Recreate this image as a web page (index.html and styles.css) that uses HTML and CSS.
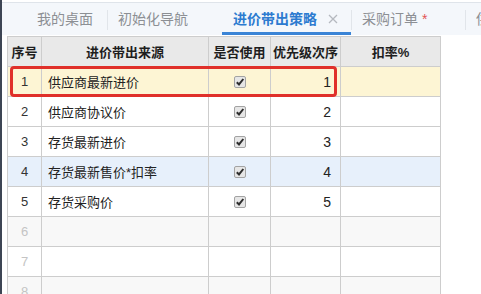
FILE: index.html
```html
<!DOCTYPE html>
<html>
<head>
<meta charset="utf-8">
<link rel="stylesheet" href="styles.css">
</head>
<body>
<div class="app">
  <div class="edge"></div>
  <div class="main">
    <div class="tabs">
      <div class="tab t1">我的桌面</div>
      <div class="tab t2 sep">初始化导航</div>
      <div class="tab t3 active">进价带出策略<svg class="close" width="10" height="10" viewBox="0 0 10 10"><path d="M1 1L9 9M9 1L1 9" stroke="#b5b9bf" stroke-width="1.3"/></svg></div>
      <div class="tab t4 sep">采购订单 <span class="star">*</span></div>
      <div class="tab t5 sep">供应商</div>
    </div>
    <div class="grid-wrap">
      <table class="grid">
        <colgroup>
          <col class="c1"><col class="c2"><col class="c3"><col class="c4"><col class="c5">
        </colgroup>
        <thead>
          <tr><th>序号</th><th>进价带出来源</th><th>是否使用</th><th>优先级次序</th><th>扣率%</th></tr>
        </thead>
        <tbody>
          <tr class="sel"><td class="num">1</td><td class="txt">供应商最新进价</td><td class="chk"><span class="cb"><svg width="10" height="10" viewBox="0 0 10 10"><path d="M1.8 5.2L4 7.4L8.3 2" fill="none" stroke="#2e2e2e" stroke-width="2"/></svg></span></td><td class="pri">1</td><td></td></tr>
          <tr><td class="num">2</td><td class="txt">供应商协议价</td><td class="chk"><span class="cb"><svg width="10" height="10" viewBox="0 0 10 10"><path d="M1.8 5.2L4 7.4L8.3 2" fill="none" stroke="#2e2e2e" stroke-width="2"/></svg></span></td><td class="pri">2</td><td></td></tr>
          <tr><td class="num">3</td><td class="txt">存货最新进价</td><td class="chk"><span class="cb"><svg width="10" height="10" viewBox="0 0 10 10"><path d="M1.8 5.2L4 7.4L8.3 2" fill="none" stroke="#2e2e2e" stroke-width="2"/></svg></span></td><td class="pri">3</td><td></td></tr>
          <tr class="hover"><td class="num">4</td><td class="txt">存货最新售价*扣率</td><td class="chk"><span class="cb"><svg width="10" height="10" viewBox="0 0 10 10"><path d="M1.8 5.2L4 7.4L8.3 2" fill="none" stroke="#2e2e2e" stroke-width="2"/></svg></span></td><td class="pri">4</td><td></td></tr>
          <tr><td class="num">5</td><td class="txt">存货采购价</td><td class="chk"><span class="cb"><svg width="10" height="10" viewBox="0 0 10 10"><path d="M1.8 5.2L4 7.4L8.3 2" fill="none" stroke="#2e2e2e" stroke-width="2"/></svg></span></td><td class="pri">5</td><td></td></tr>
          <tr class="alt empty"><td class="num">6</td><td></td><td></td><td></td><td></td></tr>
          <tr class="empty"><td class="num">7</td><td></td><td></td><td></td><td></td></tr>
          <tr class="alt empty"><td class="num">8</td><td></td><td></td><td></td><td></td></tr>
        </tbody>
      </table>
      <div class="focus-box"></div>
    </div>
  </div>
</div>
</body>
</html>
```

FILE: styles.css
```css
html, body {
  margin: 0;
  padding: 0;
  background: #ffffff;
  overflow: hidden;
}
body {
  width: 481px;
  height: 294px;
  font-family: "Liberation Sans", "Noto Sans CJK SC", sans-serif;
  font-size: 13px;
  color: #222;
}
.app {
  display: flex;
  height: 294px;
}
.edge {
  width: 2px;
  background: #3d4554;
  flex: none;
}
.main {
  flex: 1;
  padding-top: 2px;
  min-width: 0;
}
.tabs {
  height: 32px;
  border-top: 1px solid #dfe4ea;
  background: #f4f7fb;
  display: flex;
  white-space: nowrap;
  overflow: hidden;
}
.tab {
  position: relative;
  box-sizing: border-box;
  height: 32px;
  line-height: 32px;
  font-size: 14px;
  color: #8c8f94;
  padding-left: 11px;
  flex: none;
}
.tab.sep::before {
  content: "";
  position: absolute;
  left: 0;
  top: 7px;
  height: 20px;
  width: 1px;
  background: #e1e5ea;
}
.t1 { width: 105px; padding-left: 35px; }
.t2 { width: 115px; }
.t3 { width: 129px; }
.t4 { width: 114px; }
.t5 { width: 60px; }
.tab.active {
  color: #2d7bd0;
  font-weight: bold;
}
.tab.active::after {
  content: "";
  position: absolute;
  left: 0;
  right: 0;
  bottom: 0;
  height: 3px;
  background: #3a84d6;
}
.close {
  position: absolute;
  left: 106px;
  top: 11px;
}
.star {
  color: #e25555;
}
.grid-wrap {
  position: relative;
  margin-left: 5px;
  margin-top: 1px;
  width: 434px;
}
.grid {
  border-collapse: collapse;
  table-layout: fixed;
  width: 434px;
}
.c1 { width: 34px; }
.c2 { width: 167px; }
.c3 { width: 62px; }
.c4 { width: 70px; }
.c5 { width: 100px; }
.grid th, .grid td {
  border: 1px solid #cdcdcd;
  height: 30px;
  padding: 0;
  box-sizing: border-box;
}
.grid th {
  background: #e9e9e9;
  font-weight: bold;
  font-size: 13px;
  color: #1e1e1e;
  text-align: center;
}
.grid td.num {
  text-align: center;
  color: #333;
}
.grid td.txt {
  padding-left: 6px;
  color: #222;
}
.grid td.chk {
  text-align: center;
}
.grid td.pri {
  text-align: right;
  padding-right: 9px;
  font-size: 14px;
}
.grid tr.sel td {
  background: #fdf5d4;
}
.grid tr.hover td {
  background: #e7f0fb;
}
.grid tr.alt td {
  background: #f8f8f8;
}
.grid tr.empty td.num {
  color: #c4c4c4;
}
.cb {
  display: inline-block;
  width: 12px;
  height: 12px;
  box-sizing: border-box;
  border: 1px solid #a3a3a3;
  border-radius: 2px;
  background: #e6e6e6;
  vertical-align: middle;
  position: relative;
  top: -1px;
}
.cb svg {
  display: block;
  margin: 0;
}
.focus-box {
  position: absolute;
  left: 3px;
  top: 30px;
  width: 327px;
  height: 31px;
  box-sizing: border-box;
  border: 3px solid #e0302a;
  border-radius: 4px;
  pointer-events: none;
}
```
